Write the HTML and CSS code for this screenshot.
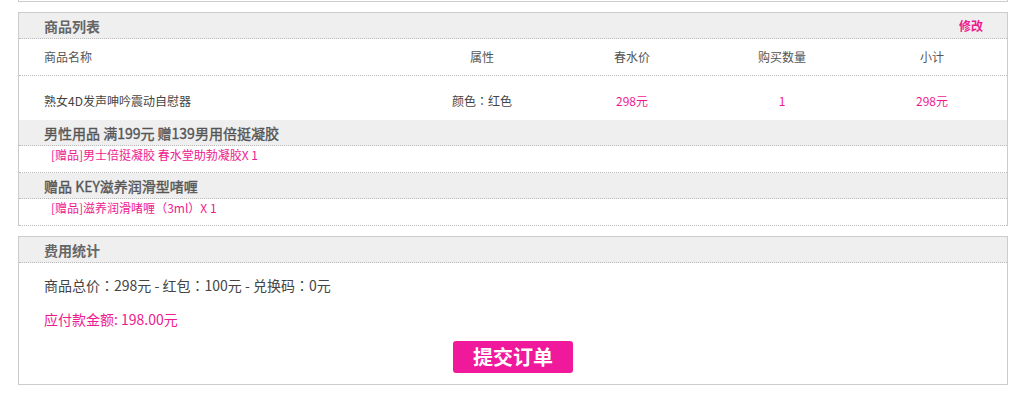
FILE: index.html
```html
<!DOCTYPE html>
<html lang="zh-CN">
<head>
<meta charset="utf-8">
<title>订单确认</title>
<link rel="stylesheet" href="styles.css">
</head>
<body>
<div class="wrap">
  <div class="prev-box"></div>

  <section class="box goods">
    <div class="box-head">
      <span class="box-title">商品列表</span>
      <a class="edit" href="#">修改</a>
    </div>
    <div class="grid grid-head">
      <div class="c-name">商品名称</div>
      <div class="c">属性</div>
      <div class="c">春水价</div>
      <div class="c">购买数量</div>
      <div class="c">小计</div>
    </div>
    <div class="grid grid-row">
      <div class="c-name">熟女4D发声呻吟震动自慰器</div>
      <div class="c">颜色<span class="colon" lang="ja">：</span>红色</div>
      <div class="c pink">298元</div>
      <div class="c pink">1</div>
      <div class="c pink">298元</div>
    </div>
    <div class="gift-head">男性用品 满199元 赠139男用倍挺凝胶</div>
    <div class="gift-item">[赠品]男士倍挺凝胶 春水堂助勃凝胶X 1</div>
    <div class="gift-head">赠品 KEY滋养润滑型啫喱</div>
    <div class="gift-item">[赠品]滋养润滑啫喱<span class="colon" lang="ja">（</span>3ml<span class="colon" lang="ja">）</span>X 1</div>
  </section>

  <section class="box cost">
    <div class="box-head">
      <span class="box-title">费用统计</span>
    </div>
    <div class="cost-body">
      <div class="cost-line">商品总价<span class="colon" lang="ja">：</span>298元 - 红包<span class="colon" lang="ja">：</span>100元 - 兑换码<span class="colon" lang="ja">：</span>0元</div>
      <div class="cost-pay">应付款金额: 198.00元</div>
      <div class="btn-row"><button class="submit" type="button">提交订单</button></div>
    </div>
  </section>
</div>
</body>
</html>
```

FILE: styles.css
```css
* { box-sizing: border-box; }

body {
  margin: 0;
  background: #fff;
  font-family: "Noto Sans CJK SC", "Microsoft YaHei", sans-serif;
  color: #444;
}

.wrap {
  width: 990px;
  margin-left: 18px;
}

.prev-box {
  height: 2px;
  border-left: 1px solid #ccc;
  border-right: 1px solid #ccc;
  border-bottom: 1px solid #ccc;
}

.box {
  margin-top: 10px;
  border: 1px solid #ccc;
}

.goods { border-bottom: none; }

.colon { font-family: "Noto Sans CJK JP", "Noto Sans CJK SC", sans-serif; }

.box-head {
  height: 26px;
  background: #efefef;
  border-bottom: 1px dotted #bbb;
  display: flex;
  align-items: center;
  justify-content: space-between;
  padding: 0 24px 0 25px;
}

.box-title {
  font-size: 14px;
  line-height: 20px;
  font-weight: bold;
  color: #666;
}

.edit {
  font-size: 12px;
  line-height: 20px;
  font-weight: bold;
  color: #ee1a8f;
  text-decoration: none;
}

.grid {
  display: grid;
  grid-template-columns: 1fr 150px 150px 150px 150px;
  font-size: 12px;
}

.c-name { padding-left: 25px; }
.c { text-align: center; }

.grid-head {
  height: 37px;
  align-items: center;
  border-bottom: 1px dotted #bbb;
  color: #555;
  line-height: 20px;
}

.grid-row {
  height: 44px;
  padding-top: 15px;
  line-height: 20px;
  color: #444;
}

.pink { color: #ee1a8f; }

.gift-head {
  height: 26px;
  background: #efefef;
  border-bottom: 1px dotted #bbb;
  padding: 2px 0 0 25px;
  font-size: 14px;
  line-height: 23px;
  color: #555;
  -webkit-text-stroke: 0.35px #555;
}

.gift-item {
  height: 27px;
  border-bottom: 1px dotted #bbb;
  padding-left: 32px;
  font-size: 12px;
  line-height: 18px;
  color: #ee1a8f;
}

.cost-body {
  padding: 12px 25px 11px;
}

.cost-line {
  font-size: 14px;
  line-height: 20px;
  color: #444;
}

.cost-pay {
  margin-top: 14px;
  font-size: 14px;
  line-height: 20px;
  color: #ee1a8f;
}

.btn-row {
  margin-top: 12px;
  display: flex;
  justify-content: center;
  margin-left: -25px;
  margin-right: -25px;
}

.submit {
  width: 120px;
  height: 32px;
  border: none;
  border-radius: 3px;
  background: #f0199b;
  color: #fff;
  font-family: "Noto Sans CJK SC", "Microsoft YaHei", sans-serif;
  font-size: 20px;
  font-weight: bold;
  line-height: 32px;
  padding: 0;
  cursor: pointer;
}
```
